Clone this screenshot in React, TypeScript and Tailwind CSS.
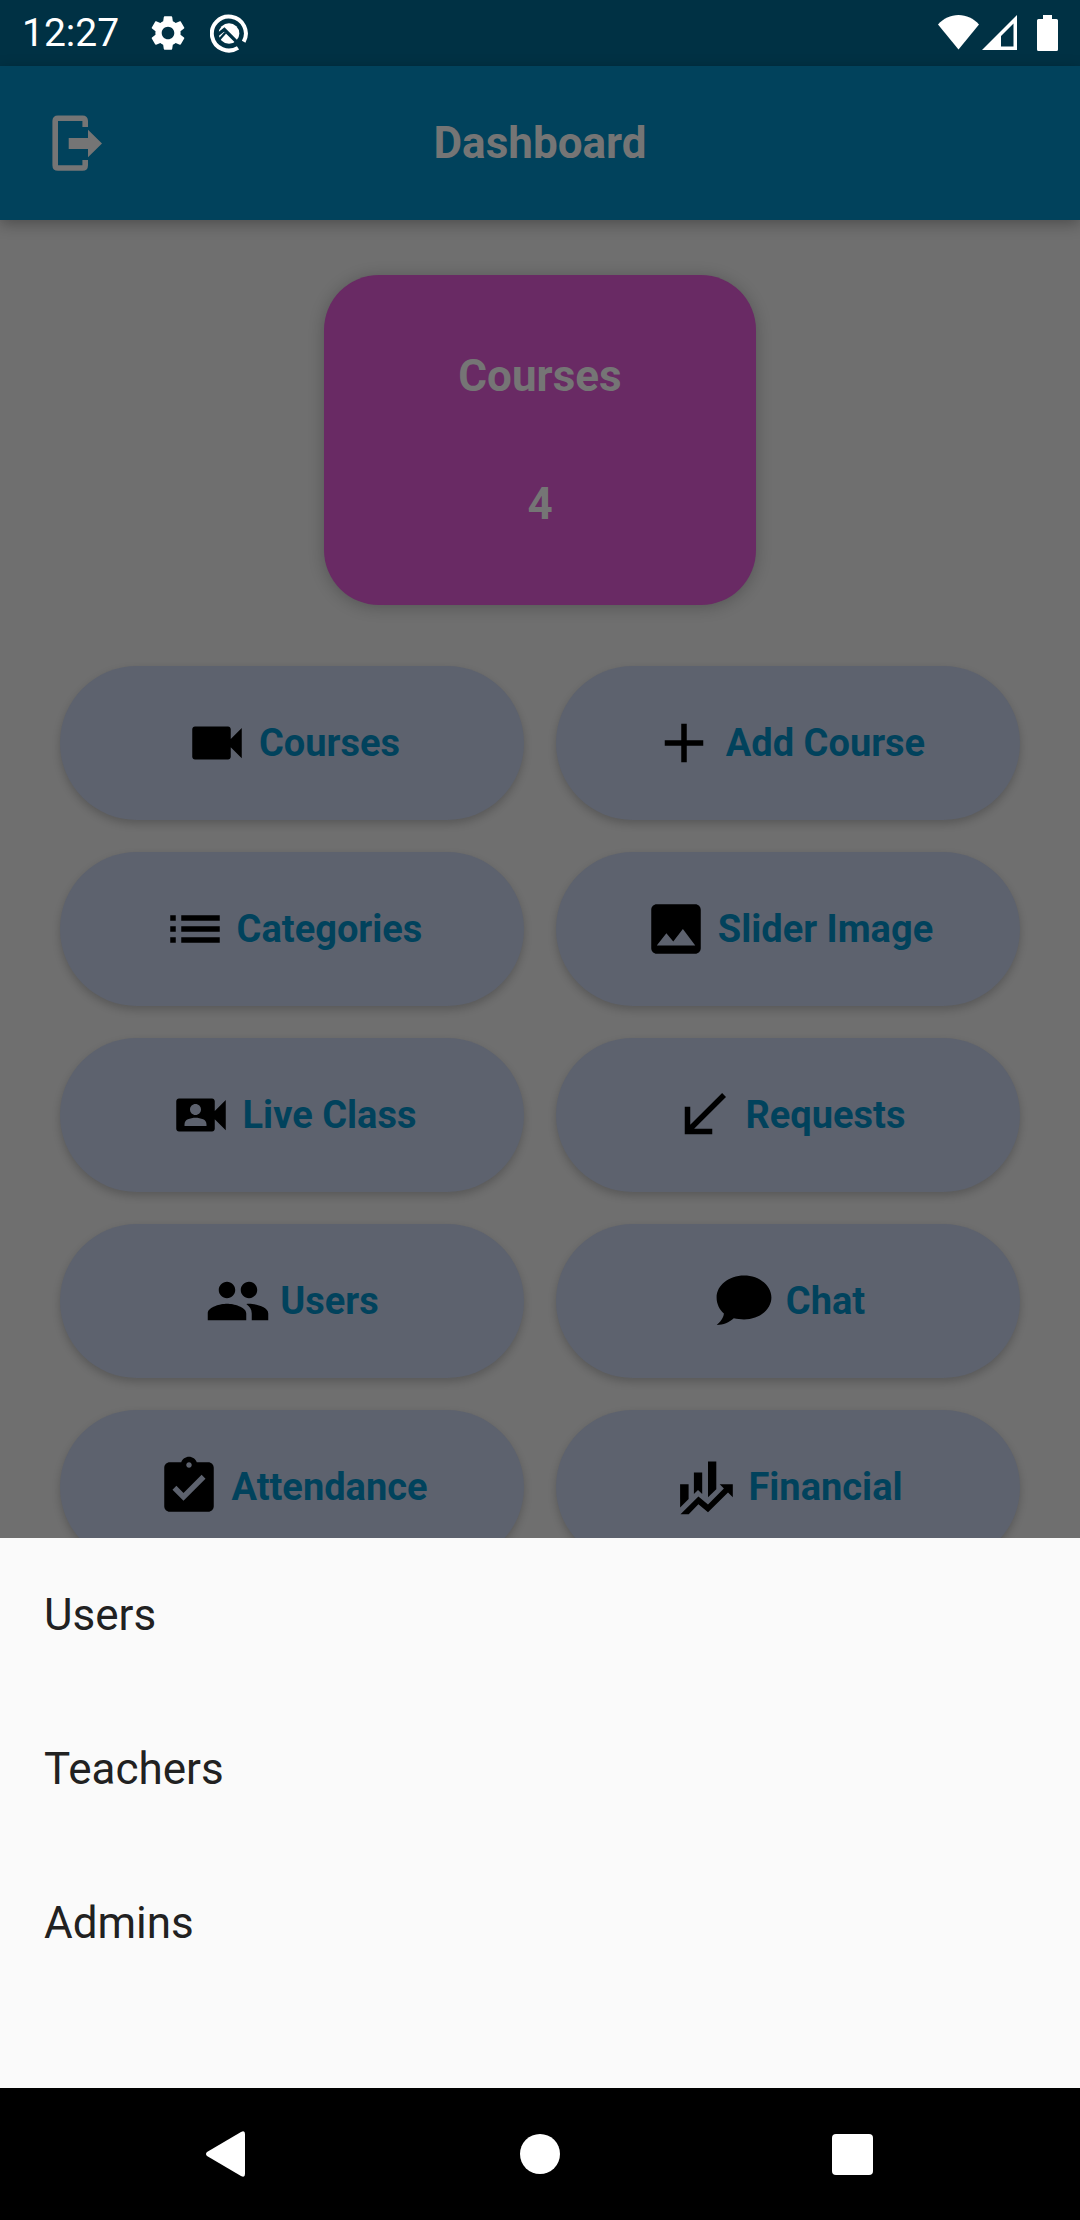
import type { ReactNode } from "react";

const iconPaths = {
  videocam:
    "M17 10.5V7c0-.55-.45-1-1-1H4c-.55 0-1 .45-1 1v10c0 .55.45 1 1 1h12c.55 0 1-.45 1-1v-3.5l4 4v-11l-4 4z",
  add: "M19 13h-6v6h-2v-6H5v-2h6V5h2v6h6v2z",
  list: "M3 13h2v-2H3v2zm0 4h2v-2H3v2zm0-8h2V7H3v2zm4 4h14v-2H7v2zm0 4h14v-2H7v2zM7 7v2h14V7H7z",
  image:
    "M21 19V5c0-1.1-.9-2-2-2H5c-1.1 0-2 .9-2 2v14c0 1.1.9 2 2 2h14c1.1 0 2-.9 2-2zM8.5 13.5l2.5 3.01L14.5 12l4.5 6H5l3.5-4.5z",
  live: "M17 10.5V7c0-.55-.45-1-1-1H4c-.55 0-1 .45-1 1v10c0 .55.45 1 1 1h12c.55 0 1-.45 1-1v-3.5l4 4v-11l-4 4zM10 8c1.1 0 2 .9 2 2s-.9 2-2 2-2-.9-2-2 .9-2 2-2zm4 8H6v-.57c0-.81.48-1.53 1.22-1.85C8.07 13.21 9.01 13 10 13s1.93.21 2.78.58c.74.32 1.22 1.04 1.22 1.85V16z",
  received: "M20 5.41L18.59 4 7 15.59V9H5v10h10v-2H8.41z",
  people:
    "M16 11c1.66 0 2.99-1.34 2.99-3S17.66 5 16 5c-1.66 0-3 1.34-3 3s1.34 3 3 3zm-8 0c1.66 0 2.99-1.34 2.99-3S9.66 5 8 5C6.34 5 5 6.34 5 8s1.34 3 3 3zm0 2c-2.33 0-7 1.17-7 3.5V19h14v-2.5c0-2.33-4.67-3.5-7-3.5zm8 0c-.29 0-.62.02-.97.05 1.16.84 1.97 1.97 1.97 3.45V19h6v-2.5c0-2.33-4.67-3.5-7-3.5z",
  assignment:
    "M19 3h-4.18C14.4 1.84 13.3 1 12 1c-1.3 0-2.4.84-2.82 2H5c-1.1 0-2 .9-2 2v14c0 1.1.9 2 2 2h14c1.1 0 2-.9 2-2V5c0-1.1-.9-2-2-2zm-7 0c.55 0 1 .45 1 1s-.45 1-1 1-1-.45-1-1 .45-1 1-1zm-2 14l-4-4 1.41-1.41L10 14.17l6.59-6.59L18 9l-8 8z",
  settings:
    "M19.14 12.94c.04-.3.06-.61.06-.94 0-.32-.02-.64-.07-.94l2.03-1.58c.18-.14.23-.41.12-.61l-1.92-3.32c-.12-.22-.37-.29-.59-.22l-2.39.96c-.5-.38-1.03-.7-1.62-.94l-.36-2.54c-.04-.24-.24-.41-.48-.41h-3.84c-.24 0-.43.17-.47.41l-.36 2.54c-.59.24-1.13.57-1.62.94l-2.39-.96c-.22-.08-.47 0-.59.22L2.74 8.87c-.12.21-.08.47.12.61l2.03 1.58c-.05.3-.09.63-.09.94s.02.64.07.94l-2.03 1.58c-.18.14-.23.41-.12.61l1.92 3.32c.12.22.37.29.59.22l2.39-.96c.5.38 1.03.7 1.62.94l.36 2.54c.05.24.24.41.48.41h3.84c.24 0 .44-.17.47-.41l.36-2.54c.59-.24 1.13-.56 1.62-.94l2.39.96c.22.08.47 0 .59-.22l1.92-3.32c.12-.22.07-.47-.12-.61l-2.01-1.58zM12 15.6c-1.98 0-3.6-1.62-3.6-3.6s1.62-3.6 3.6-3.6 3.6 1.62 3.6 3.6-1.62 3.6-3.6 3.6z",
};

function MaterialIcon({ d }: { d: string }) {
  return (
    <svg viewBox="0 0 24 24" className="size-[66px] shrink-0 fill-black" aria-hidden="true">
      <path d={d} fillRule="evenodd" />
    </svg>
  );
}

function ChatIcon() {
  return (
    <svg viewBox="0 0 66 66" className="size-[66px] shrink-0 fill-black" aria-hidden="true">
      <path d="M33 7.6C48.1 7.6 60.4 17.4 60.4 29.5S48.1 51.4 33 51.4C29.500 51.400 26 51.100 22.800 50.300C18 54.500 12.500 57 5.700 57C9.300 54 12.500 50 12.900 45.600C8.400 41.500 5.600 36 5.600 29.500C5.600 17.400 17.900 7.600 33 7.600Z" />
    </svg>
  );
}

function FinancialIcon() {
  return (
    <svg viewBox="0 0 66 66" className="size-[66px] shrink-0 fill-black" aria-hidden="true">
      <path d="M7.100 30.300H15.600V45L7.100 53.500Z" />
      <path d="M20.900 18.600H29.200V40L25 36L20.900 40Z" />
      <path d="M35 7.600H43.300V35.300L35 43.300Z" />
      <path d="M7.500 60.300L25.400 42.600L35 50.500L50.900 34.600L46.700 30.300H59.800V43.300L55 38.600L35 58.300L25.400 50.300L15.700 60.300Z" />
    </svg>
  );
}

const actions: { label: string; icon: ReactNode }[] = [
  { label: "Courses", icon: <MaterialIcon d={iconPaths.videocam} /> },
  { label: "Add Course", icon: <MaterialIcon d={iconPaths.add} /> },
  { label: "Categories", icon: <MaterialIcon d={iconPaths.list} /> },
  { label: "Slider Image", icon: <MaterialIcon d={iconPaths.image} /> },
  { label: "Live Class", icon: <MaterialIcon d={iconPaths.live} /> },
  { label: "Requests", icon: <MaterialIcon d={iconPaths.received} /> },
  { label: "Users", icon: <MaterialIcon d={iconPaths.people} /> },
  { label: "Chat", icon: <ChatIcon /> },
  { label: "Attendance", icon: <MaterialIcon d={iconPaths.assignment} /> },
  { label: "Financial", icon: <FinancialIcon /> },
];

const sheetItems = ["Users", "Teachers", "Admins"];

function StatusBar() {
  return (
    <div className="flex h-[66px] shrink-0 items-center justify-between bg-[#003144] px-[22px] text-white">
      <div className="flex items-center">
        <span className="text-[39px] leading-[46px]">12:27</span>
        <svg viewBox="0 0 24 24" className="ml-7 size-[42px] fill-white" aria-hidden="true">
          <path d={iconPaths.settings} />
        </svg>
        <svg viewBox="0 0 114 116" className="ml-[21px] h-[39px] w-[38px]" aria-hidden="true">
          <path d="M84 101A51 51 0 1 1 101 83" fill="none" stroke="#fff" strokeWidth="12" />
          <circle cx="57" cy="58" r="31" fill="#fff" />
          <path d="M20 64L43 46L92 95" fill="none" stroke="#003144" strokeWidth="10" />
          <path d="M46 56L28 76" fill="none" stroke="#003144" strokeWidth="7" />
        </svg>
      </div>
      <div className="flex items-center">
        <svg viewBox="0 0 41 36" className="h-9 w-[41px] fill-white" aria-hidden="true">
          <path d="M0 9.500C5.500 3.500 12.500 0 20.500 0S35.500 3.500 41 9.500L20.500 34.500Z" />
        </svg>
        <svg viewBox="0 0 35 36" className="ml-[3px] h-9 w-[35px] fill-white" aria-hidden="true">
          <path fillRule="evenodd" d="M35 0V35H0ZM31.500 8.500L19 21V31.500H31.500Z" />
        </svg>
        <svg viewBox="0 0 21 36" className="ml-5 h-9 w-[21px] fill-white" aria-hidden="true">
          <path d="M6 0H15V4H19.500Q21 4 21 5.500V34.500Q21 36 19.500 36H1.500Q0 36 0 34.500V5.500Q0 4 1.500 4H6Z" />
        </svg>
      </div>
    </div>
  );
}

function AppBar() {
  return (
    <header className="relative z-10 grid h-[154px] shrink-0 grid-cols-[1fr_auto_1fr] items-center bg-[#01425c] px-[52px] shadow-[0_4px_14px_rgba(0,0,0,0.3)]">
      <button type="button" aria-label="Log out" className="justify-self-start">
        <svg viewBox="0 0 50 56" className="h-14 w-[50px]" aria-hidden="true">
          <path
            d="M33.200 12V6Q33.200 3.200 30.400 3.200H6Q3.200 3.200 3.200 6V50.200Q3.200 53 6 53H30.400Q33.200 53 33.200 50.200V45"
            fill="none"
            stroke="#757575"
            strokeWidth="5.600"
          />
          <path d="M16.700 23H36V14.700L50 28.500L36 42.300V34H16.700Z" fill="#757575" />
        </svg>
      </button>
      <h1 className="text-[44px] leading-[52px] font-bold text-[#757575]">Dashboard</h1>
    </header>
  );
}

export default function App() {
  return (
    <div className="flex h-screen flex-col overflow-hidden bg-[#6f6f6f] font-[Roboto,sans-serif]">
      <StatusBar />
      <AppBar />

      <main className="min-h-0 flex-1 overflow-hidden px-[60px] pt-[55px]">
        <section className="-mx-[60px] flex justify-center">
          <div className="flex w-2/5 flex-col items-center gap-[76px] rounded-[55px] bg-[#692a64] py-[75px] text-[44px] leading-[52px] font-bold text-[#757575] shadow-[0_2px_16px_rgba(0,0,0,0.24)]">
            <h2>Courses</h2>
            <p>4</p>
          </div>
        </section>

        <nav aria-label="Dashboard sections" className="mt-[61px] grid grid-cols-2 gap-8">
          {actions.map(({ label, icon }) => (
            <button
              key={label}
              type="button"
              className="flex h-[154px] items-center justify-center gap-[9px] rounded-full bg-[#5d626e] text-[38px] leading-[46px] font-bold text-[#01425c] shadow-[0_4px_8px_rgba(0,0,0,0.2)]"
            >
              {icon}
              <span>{label}</span>
            </button>
          ))}
        </nav>
      </main>

      <section aria-label="User groups" className="z-10 shrink-0 bg-[#fafafa] pb-[88px]">
        <ul>
          {sheetItems.map((item) => (
            <li key={item}>
              <button
                type="button"
                className="flex h-[154px] w-full items-center px-11 text-left text-[44px] leading-[52px] text-[#212121]"
              >
                {item}
              </button>
            </li>
          ))}
        </ul>
      </section>

      <nav aria-label="System navigation" className="grid h-[132px] shrink-0 grid-cols-3 bg-black px-[72px]">
        <button type="button" aria-label="Back" className="flex items-center justify-center">
          <svg viewBox="0 0 44 46" className="h-[46px] w-11 fill-white" aria-hidden="true">
            <path d="M1 21Q-1 23 1 25L35 45Q39 47 39 43V3Q39 -1 35 1Z" />
          </svg>
        </button>
        <button type="button" aria-label="Home" className="flex items-center justify-center">
          <span className="size-10 rounded-full bg-white" />
        </button>
        <button type="button" aria-label="Overview" className="flex items-center justify-center">
          <span className="size-[41px] rounded-[4px] bg-white" />
        </button>
      </nav>
    </div>
  );
}
